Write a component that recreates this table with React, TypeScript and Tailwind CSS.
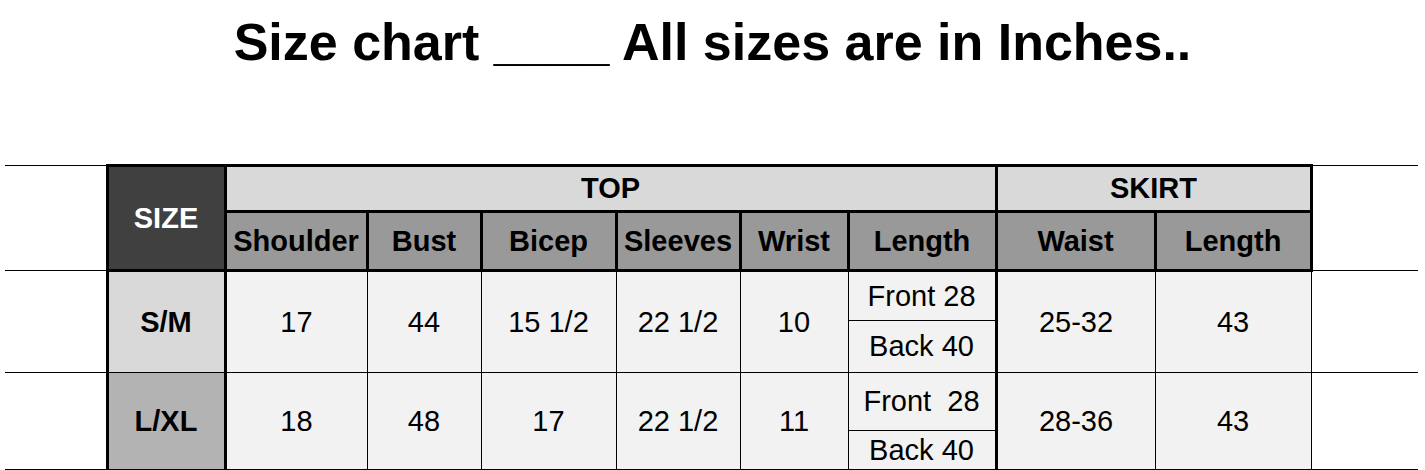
const font = "font-['Liberation_Sans',Arial,sans-serif]";

const thick = "border-[3px] border-black";
const head2 = `${thick} bg-[#999999] font-bold text-center`;
const cell = "border border-black bg-[#f2f2f2] text-center";

interface SizeRow {
  label: string;
  labelBg: string;
  shoulder: string;
  bust: string;
  bicep: string;
  sleeves: string;
  wrist: string;
  front: string;
  back: string;
  waist: string;
  length: string;
  heights: [string, string];
}

const rows: SizeRow[] = [
  {
    label: "S/M",
    labelBg: "bg-[#d9d9d9]",
    shoulder: "17",
    bust: "44",
    bicep: "15 1/2",
    sleeves: "22 1/2",
    wrist: "10",
    front: "Front 28",
    back: "Back 40",
    waist: "25-32",
    length: "43",
    heights: ["h-[50px]", "h-[52px]"],
  },
  {
    label: "L/XL",
    labelBg: "bg-[#b3b3b3]",
    shoulder: "18",
    bust: "48",
    bicep: "17",
    sleeves: "22 1/2",
    wrist: "11",
    front: "Front\u00a0\u00a028",
    back: "Back 40",
    waist: "28-36",
    length: "43",
    heights: ["h-[58px]", "h-[39px]"],
  },
];

function DataRows({ row }: { row: SizeRow }) {
  return (
    <>
      <tr className={row.heights[0]}>
        <td rowSpan={2} className="border-y border-black bg-white" />
        <td
          rowSpan={2}
          className={`border-y border-x-[3px] border-black ${row.labelBg} font-bold text-center`}
        >
          {row.label}
        </td>
        <td rowSpan={2} className={cell}>{row.shoulder}</td>
        <td rowSpan={2} className={cell}>{row.bust}</td>
        <td rowSpan={2} className={cell}>{row.bicep}</td>
        <td rowSpan={2} className={cell}>{row.sleeves}</td>
        <td rowSpan={2} className={cell}>{row.wrist}</td>
        <td className="border border-r-[3px] border-black bg-[#f2f2f2] text-center">
          {row.front}
        </td>
        <td rowSpan={2} className={`${cell} border-l-[3px]`}>{row.waist}</td>
        <td rowSpan={2} className={cell}>{row.length}</td>
        <td rowSpan={2} className="border-y border-black bg-white" />
      </tr>
      <tr className={row.heights[1]}>
        <td className="border border-r-[3px] border-black bg-[#f2f2f2] text-center">
          {row.back}
        </td>
      </tr>
    </>
  );
}

export default function App() {
  return (
    <div className={`${font} bg-white text-black w-[1425px] h-[470px] overflow-hidden`}>
      <h1 className="pt-[16px] text-center text-[52px] leading-[52px] font-bold">
        Size chart ____ All sizes are in Inches..
      </h1>
      <table className="ml-[5px] mt-[96px] w-[1413px] table-fixed border-collapse text-[29px] leading-none">
        <colgroup>
          <col className="w-[102px]" />
          <col className="w-[118px]" />
          <col className="w-[142px]" />
          <col className="w-[114px]" />
          <col className="w-[135px]" />
          <col className="w-[124px]" />
          <col className="w-[108px]" />
          <col className="w-[148px]" />
          <col className="w-[159px]" />
          <col className="w-[156px]" />
          <col className="w-[107px]" />
        </colgroup>
        <tbody>
          <tr className="h-[46px]">
            <td rowSpan={2} className="border-y border-black bg-white" />
            <td
              rowSpan={2}
              className={`${thick} bg-[#404040] text-white font-bold text-center`}
            >
              SIZE
            </td>
            <td colSpan={6} className={`${thick} bg-[#d9d9d9] font-bold text-center`}>
              TOP
            </td>
            <td colSpan={2} className={`${thick} bg-[#d9d9d9] font-bold text-center`}>
              SKIRT
            </td>
            <td rowSpan={2} className="border-y border-black bg-white" />
          </tr>
          <tr className="h-[59px]">
            <td className={head2}>Shoulder</td>
            <td className={head2}>Bust</td>
            <td className={head2}>Bicep</td>
            <td className={head2}>Sleeves</td>
            <td className={head2}>Wrist</td>
            <td className={head2}>Length</td>
            <td className={head2}>Waist</td>
            <td className={head2}>Length</td>
          </tr>
          {rows.map((r) => (
            <DataRows key={r.label} row={r} />
          ))}
        </tbody>
      </table>
    </div>
  );
}
